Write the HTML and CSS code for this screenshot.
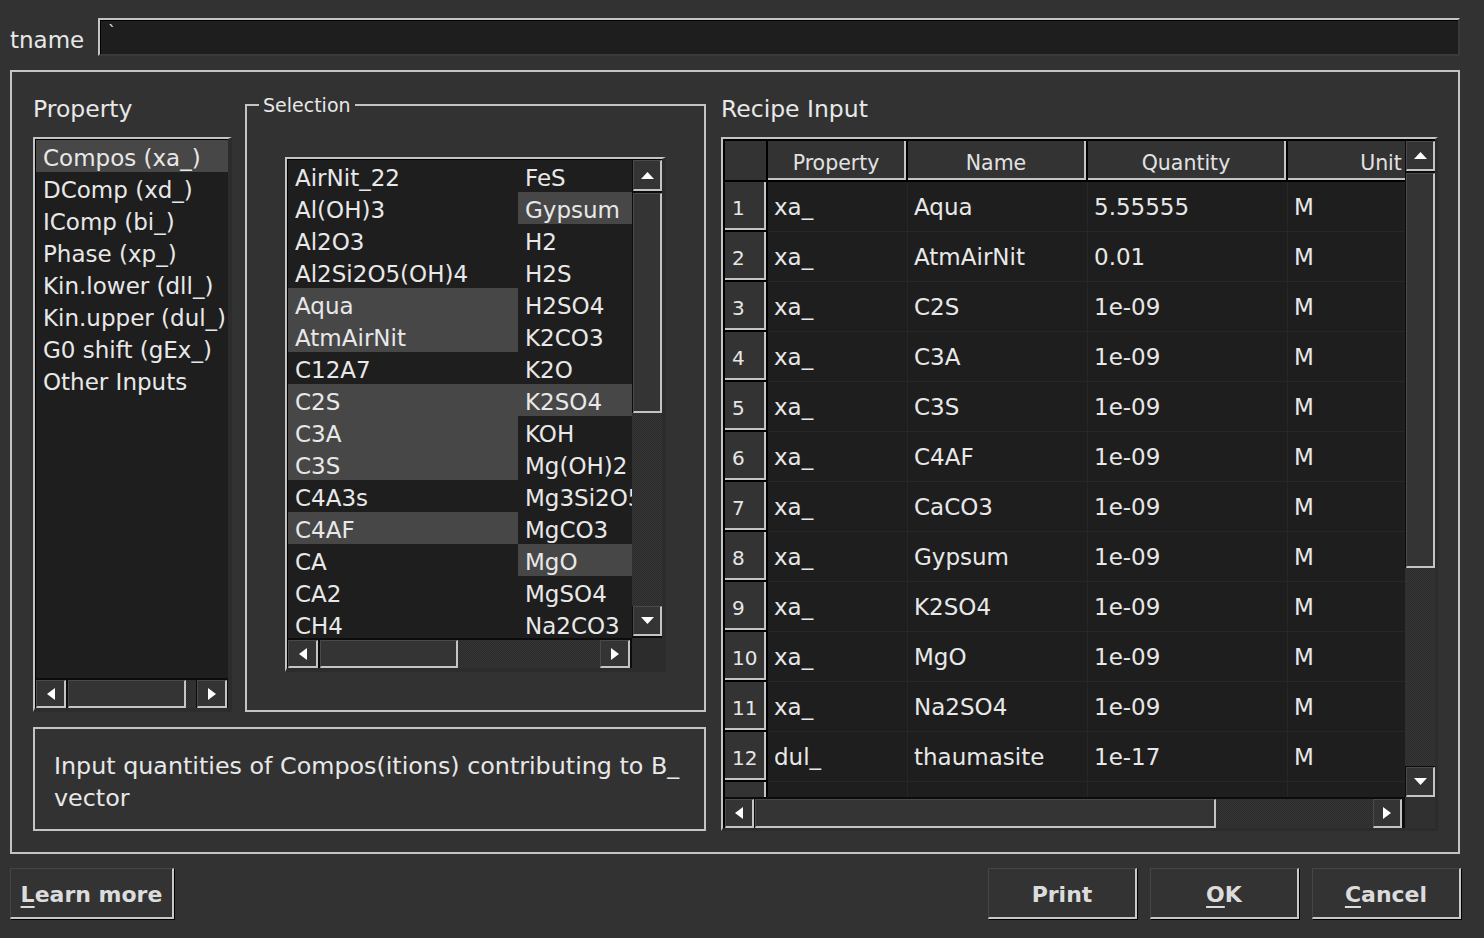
FILE: index.html
```html
<!DOCTYPE html>
<html>
<head>
<meta charset="utf-8">
<title>Recipe</title>
<link rel="stylesheet" href="styles.css">
</head>
<body>
<div class="dialog">
  <div class="name-row">
    <div class="name-label">tname</div>
    <div class="name-input">`</div>
  </div>

  <div class="main-box">
    <div class="left-pane">
      <div class="upper">
        <div class="prop-col">
          <div class="heading">Property</div>
          <div class="frame prop-frame">
            <div class="frame-inner">
              <div class="list prop-list">
                <div class="item sel">Compos (xa_)</div>
                <div class="item">DComp (xd_)</div>
                <div class="item">IComp (bi_)</div>
                <div class="item">Phase (xp_)</div>
                <div class="item">Kin.lower (dll_)</div>
                <div class="item">Kin.upper (dul_)</div>
                <div class="item">G0 shift (gEx_)</div>
                <div class="item">Other Inputs</div>
              </div>
              <div class="hscroll prop-hs">
                <div class="sbtn"><svg width="8" height="12" viewBox="0 0 8 12"><polygon points="8,0 8,12 0,6" fill="#fff"/></svg></div>
                <div class="thumb prop-thumb"></div>
                <div class="trough"></div>
                <div class="sbtn"><svg width="8" height="12" viewBox="0 0 8 12"><polygon points="0,0 8,6 0,12" fill="#fff"/></svg></div>
              </div>
            </div>
          </div>
        </div>

        <div class="groupbox sel-box">
          <div class="group-title">Selection</div>
          <div class="frame sel-frame">
            <div class="frame-inner">
              <div class="sel-top">
                <div class="sel-view">
                  <div class="sel-col c1">
                    <div class="item">AirNit_22</div>
                    <div class="item">Al(OH)3</div>
                    <div class="item">Al2O3</div>
                    <div class="item">Al2Si2O5(OH)4</div>
                    <div class="item sel">Aqua</div>
                    <div class="item sel">AtmAirNit</div>
                    <div class="item">C12A7</div>
                    <div class="item sel">C2S</div>
                    <div class="item sel">C3A</div>
                    <div class="item sel">C3S</div>
                    <div class="item">C4A3s</div>
                    <div class="item sel">C4AF</div>
                    <div class="item">CA</div>
                    <div class="item">CA2</div>
                    <div class="item">CH4</div>
                  </div>
                  <div class="sel-col c2">
                    <div class="item">FeS</div>
                    <div class="item sel">Gypsum</div>
                    <div class="item">H2</div>
                    <div class="item">H2S</div>
                    <div class="item">H2SO4</div>
                    <div class="item">K2CO3</div>
                    <div class="item">K2O</div>
                    <div class="item sel">K2SO4</div>
                    <div class="item">KOH</div>
                    <div class="item">Mg(OH)2</div>
                    <div class="item">Mg3Si2O5(OH)4</div>
                    <div class="item">MgCO3</div>
                    <div class="item sel">MgO</div>
                    <div class="item">MgSO4</div>
                    <div class="item">Na2CO3</div>
                  </div>
                </div>
                <div class="vscroll sel-vs">
                  <div class="sbtn up"><svg width="13" height="7" viewBox="0 0 13 7"><polygon points="6.5,0 13,7 0,7" fill="#fff"/></svg></div>
                  <div class="thumb sel-vthumb"></div>
                  <div class="trough"></div>
                  <div class="sbtn down"><svg width="13" height="7" viewBox="0 0 13 7"><polygon points="0,0 13,0 6.5,7" fill="#fff"/></svg></div>
                </div>
              </div>
              <div class="sel-bottom">
                <div class="hscroll sel-hs">
                  <div class="sbtn"><svg width="8" height="12" viewBox="0 0 8 12"><polygon points="8,0 8,12 0,6" fill="#fff"/></svg></div>
                  <div class="thumb sel-hthumb"></div>
                  <div class="trough"></div>
                  <div class="sbtn"><svg width="8" height="12" viewBox="0 0 8 12"><polygon points="0,0 8,6 0,12" fill="#fff"/></svg></div>
                </div>
                <div class="corner"></div>
              </div>
            </div>
          </div>
        </div>
      </div>

      <div class="desc">Input quantities of Compos(itions) contributing to B_ vector</div>
    </div>

    <div class="right-pane">
      <div class="heading">Recipe Input</div>
      <div class="frame table-frame">
        <div class="frame-inner tbl-inner">
          <div class="tbl-top">
            <div class="tbl-view">
              <div class="thead">
                <div class="th th-corner"></div>
                <div class="th w1">Property</div>
                <div class="th w2">Name</div>
                <div class="th w3">Quantity</div>
                <div class="th w4">Unit</div>
              </div>
              <div class="tr"><div class="rh">1</div><div class="td w1">xa_</div><div class="td w2">Aqua</div><div class="td w3">5.55555</div><div class="td w4">M</div></div>
              <div class="tr"><div class="rh">2</div><div class="td w1">xa_</div><div class="td w2">AtmAirNit</div><div class="td w3">0.01</div><div class="td w4">M</div></div>
              <div class="tr"><div class="rh">3</div><div class="td w1">xa_</div><div class="td w2">C2S</div><div class="td w3">1e-09</div><div class="td w4">M</div></div>
              <div class="tr"><div class="rh">4</div><div class="td w1">xa_</div><div class="td w2">C3A</div><div class="td w3">1e-09</div><div class="td w4">M</div></div>
              <div class="tr"><div class="rh">5</div><div class="td w1">xa_</div><div class="td w2">C3S</div><div class="td w3">1e-09</div><div class="td w4">M</div></div>
              <div class="tr"><div class="rh">6</div><div class="td w1">xa_</div><div class="td w2">C4AF</div><div class="td w3">1e-09</div><div class="td w4">M</div></div>
              <div class="tr"><div class="rh">7</div><div class="td w1">xa_</div><div class="td w2">CaCO3</div><div class="td w3">1e-09</div><div class="td w4">M</div></div>
              <div class="tr"><div class="rh">8</div><div class="td w1">xa_</div><div class="td w2">Gypsum</div><div class="td w3">1e-09</div><div class="td w4">M</div></div>
              <div class="tr"><div class="rh">9</div><div class="td w1">xa_</div><div class="td w2">K2SO4</div><div class="td w3">1e-09</div><div class="td w4">M</div></div>
              <div class="tr"><div class="rh">10</div><div class="td w1">xa_</div><div class="td w2">MgO</div><div class="td w3">1e-09</div><div class="td w4">M</div></div>
              <div class="tr"><div class="rh">11</div><div class="td w1">xa_</div><div class="td w2">Na2SO4</div><div class="td w3">1e-09</div><div class="td w4">M</div></div>
              <div class="tr"><div class="rh">12</div><div class="td w1">dul_</div><div class="td w2">thaumasite</div><div class="td w3">1e-17</div><div class="td w4">M</div></div>
              <div class="tr"><div class="rh">13</div><div class="td w1">dll_</div><div class="td w2">thaumasite</div><div class="td w3">1e-17</div><div class="td w4">M</div></div>
            </div>
            <div class="vscroll tbl-vs">
              <div class="sbtn up"><svg width="13" height="7" viewBox="0 0 13 7"><polygon points="6.5,0 13,7 0,7" fill="#fff"/></svg></div>
              <div class="thumb tbl-vthumb"></div>
              <div class="trough"></div>
              <div class="sbtn down"><svg width="13" height="7" viewBox="0 0 13 7"><polygon points="0,0 13,0 6.5,7" fill="#fff"/></svg></div>
            </div>
          </div>
          <div class="tbl-bottom">
            <div class="hscroll tbl-hs">
              <div class="sbtn"><svg width="8" height="12" viewBox="0 0 8 12"><polygon points="8,0 8,12 0,6" fill="#fff"/></svg></div>
              <div class="thumb tbl-hthumb"></div>
              <div class="trough"></div>
              <div class="sbtn"><svg width="8" height="12" viewBox="0 0 8 12"><polygon points="0,0 8,6 0,12" fill="#fff"/></svg></div>
            </div>
            <div class="corner tbl-corner"></div>
          </div>
        </div>
      </div>
    </div>
  </div>

  <div class="button-row">
    <button class="btn learn"><u>L</u>earn more</button>
    <div class="btn-group">
      <button class="btn">Print</button>
      <button class="btn"><u>O</u>K</button>
      <button class="btn"><u>C</u>ancel</button>
    </div>
  </div>
</div>
</body>
</html>
```

FILE: styles.css
```css
* { box-sizing: border-box; }
html, body { margin: 0; padding: 0; }
body {
  background: #323232;
  color: #e8e8e8;
  font-family: "DejaVu Sans", "Liberation Sans", sans-serif;
  font-size: 23px;
  width: 1484px;
  height: 938px;
  overflow: hidden;
}
.dialog { width: 1484px; height: 938px; }

/* name row */
.name-row {
  display: flex;
  align-items: center;
  height: 38px;
  margin-top: 18px;
  padding-left: 10px;
}
.name-label { width: 88px; height: 38px; line-height: 38px; padding-top: 3px; }
.name-input {
  width: 1362px;
  height: 38px;
  background: #1e1e1e;
  border-top: 2px solid #c4c4c4;
  border-left: 2px solid #c4c4c4;
  border-right: 2px solid #3a3a3a;
  border-bottom: 2px solid #3a3a3a;
  box-shadow: inset 1px 1px 0 #000;
  padding-left: 8px;
  font-size: 16px;
  line-height: 24px;
}

/* main group box */
.main-box {
  margin: 14px 0 0 10px;
  width: 1450px;
  height: 784px;
  border: 2px solid #c4c4c4;
  display: flex;
  padding: 20px 20px 21px 21px;
}
.left-pane { width: 673px; flex: none; display: flex; flex-direction: column; }
.upper { display: flex; gap: 13px; height: 620px; }
.prop-col { width: 199px; flex: none; display: flex; flex-direction: column; }
.heading {
  height: 33px;
  line-height: 33px;
  padding-top: 1px;
  margin-bottom: 12px;
  font-size: 23.5px;
  white-space: nowrap;
}

/* sunken frames */
.frame {
  border-top: 2px solid #c4c4c4;
  border-left: 2px solid #c4c4c4;
  border-right: 4px solid #2c2c2c;
  border-bottom: 4px solid #2c2c2c;
}
.frame-inner {
  border-top: 1px solid #000;
  border-left: 1px solid #000;
  height: 100%;
  display: flex;
  flex-direction: column;
}

.list { background: #1e1e1e; }
.item {
  height: 32px;
  line-height: 32px;
  padding-top: 2px;
  padding-left: 7px;
  white-space: nowrap;
  overflow: hidden;
}
.item.sel { background: #474747; }

.prop-frame { height: 575px; }
.prop-list { height: 538px; overflow: hidden; }

/* scrollbars */
.hscroll {
  display: flex;
  flex: none;
  height: 30px;
  background: #0c0c0c;
  padding-top: 2px;
}
.vscroll {
  display: flex;
  flex-direction: column;
  flex: none;
  width: 30px;
  background: #0c0c0c;
}
.sbtn {
  flex: none;
  width: 30px;
  height: 28px;
  background: #343434;
  border-top: 1px solid #4a4a4a;
  border-left: 1px solid #4a4a4a;
  border-right: 2px solid #c4c4c4;
  border-bottom: 2px solid #c4c4c4;
  display: flex;
  align-items: center;
  justify-content: center;
}
.vscroll .sbtn { width: 29px; height: 30px; margin-left: 1px; }
.thumb {
  flex: none;
  background: #343434;
  border-top: 1px solid #4a4a4a;
  border-left: 1px solid #4a4a4a;
  border-right: 2px solid #c4c4c4;
  border-bottom: 2px solid #c4c4c4;
}
.hscroll .thumb { height: 28px; margin-left: 2px; }
.vscroll .thumb { width: 29px; margin-left: 1px; margin-top: 2px; }
.trough {
  flex: 1;
  background: repeating-conic-gradient(#2a2a2a 0 25%, #373737 0 50%) 0 0 / 2px 2px;
}
.corner { flex: none; width: 30px; background: #2c2c2c; }

.prop-thumb { width: 118px; }
.prop-hs .trough { margin-right: 1px; }
.prop-hs .sbtn:last-child { margin-right: 1px; }

/* selection group */
.groupbox {
  border: 2px solid #c4c4c4;
}
.sel-box {
  width: 461px;
  flex: none;
  margin-top: 12px;
  height: 608px;
}
.group-title {
  display: table;
  margin: -12px 0 0 12px;
  padding: 0 4px;
  height: 22px;
  line-height: 22px;
  font-size: 19px;
  background: #323232;
}
.sel-frame {
  width: 381px;
  height: 515px;
  margin: 41px 0 0 38px;
}
.sel-top { display: flex; height: 478px; }
.sel-view {
  width: 344px;
  height: 478px;
  display: flex;
  overflow: hidden;
  background: #1e1e1e;
}
.sel-col { flex: none; overflow: hidden; }
.sel-col.c1 { width: 230px; }
.sel-col.c2 { width: 114px; }
.sel-vs .sbtn.up { height: 31px; }
.sel-vthumb { height: 220px; }
.sel-vs .sbtn.down { margin-bottom: 2px; }
.sel-bottom { display: flex; height: 30px; }
.sel-hs { width: 344px; }
.sel-hthumb { width: 138px; }
.sel-hs .sbtn:last-child { margin-right: 2px; }

/* description */
.desc {
  margin-top: 15px;
  height: 104px;
  border: 2px solid #c4c4c4;
  padding: 21px 22px 0 19px;
  line-height: 32px;
  font-size: 23.8px;
}

/* right pane / table */
.right-pane { width: 717px; flex: none; margin-left: 15px; display: flex; flex-direction: column; }
.table-frame {
  height: 694px;
  border-right-width: 3px;
  border-bottom-width: 3px;
}
.tbl-inner { border-top: 2px solid #000; border-left: 2px solid #000; }
.tbl-top { display: flex; height: 656px; }
.tbl-view {
  width: 680px;
  height: 656px;
  overflow: hidden;
  background: #1e1e1e;
}
.thead {
  display: flex;
  height: 41px;
}
.th {
  flex: none;
  height: 41px;
  background: #333;
  box-shadow: inset -2px -2px 0 #000, inset -4px -4px 0 #c4c4c4;
  text-align: center;
  line-height: 38px;
  padding-top: 3px;
  font-size: 20.5px;
  color: #e2e2e2;
  padding-right: 4px;
  white-space: nowrap;
}
.th-corner { width: 43px; box-shadow: inset -2px -2px 0 #000; }
.w1 { width: 140px; flex: none; }
.w2 { width: 180px; flex: none; }
.w3 { width: 200px; flex: none; }
.w4 { width: 190px; flex: none; }
.tr { display: flex; height: 50px; }
.rh {
  flex: none;
  width: 43px;
  height: 50px;
  background: #333;
  box-shadow: inset -2px -2px 0 #000, inset -4px -4px 0 #c4c4c4;
  font-size: 20px;
  line-height: 48px;
  padding-top: 2px;
  padding-left: 7px;
  color: #e6e6e6;
}
.td {
  height: 50px;
  border-right: 1px solid #272727;
  border-bottom: 1px solid #272727;
  padding-left: 6px;
  padding-top: 2px;
  line-height: 47px;
  white-space: nowrap;
  overflow: hidden;
}
.tbl-vthumb { height: 395px; }
.tbl-vs .sbtn.down { margin-top: 1px; }
.tbl-bottom { display: flex; height: 31px; }
.tbl-hs { width: 680px; height: 31px; }
.tbl-hs .sbtn { width: 29px; height: 29px; }
.tbl-hthumb { width: 461px; height: 29px !important; margin-left: 1px !important; }
.tbl-hs .sbtn:last-child { margin-right: 3px; }
.tbl-corner { background: #303030; }

/* buttons */
.button-row {
  display: flex;
  justify-content: space-between;
  margin-top: 14px;
  padding: 0 23px 0 10px;
}
.btn-group { display: flex; gap: 13px; }
.btn {
  font-family: "DejaVu Sans", "Liberation Sans", sans-serif;
  font-weight: bold;
  font-size: 22px;
  color: #dcdcdc;
  background: #333;
  height: 51px;
  width: 149px;
  border-top: 1px solid #454545;
  border-left: 1px solid #454545;
  border-right: 2px solid #c8c8c8;
  border-bottom: 2px solid #c8c8c8;
  box-shadow: 1px 1px 0 #000;
  padding: 3px 0 0 0;
  text-align: center;
}
.btn.learn { width: 164px; }
.btn u { text-underline-offset: 4px; }
```
